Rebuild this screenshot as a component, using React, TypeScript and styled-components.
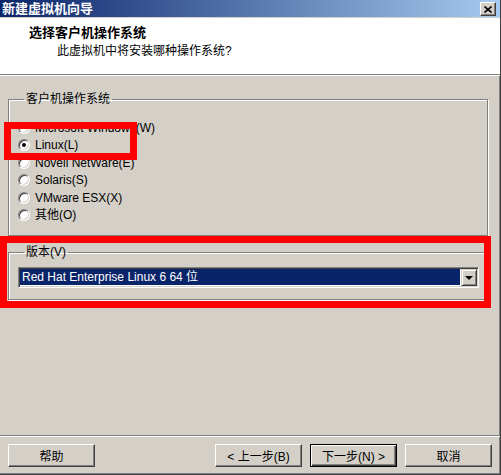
import React from "react";
import styled, { createGlobalStyle } from "styled-components";

const GlobalStyle = createGlobalStyle`
  html, body {
    margin: 0;
    padding: 0;
    background: #d4d0c8;
  }
  * {
    box-sizing: border-box;
  }
`;

const FONT = `"Liberation Sans", "Noto Sans CJK SC", sans-serif`;

const Window = styled.div`
  position: relative;
  width: 501px;
  height: 475px;
  display: flex;
  flex-direction: column;
  background: #d4d0c8;
  border-right: 1px solid #404040;
  border-bottom: 1px solid #404040;
  box-shadow: inset -1px -1px #808080;
  font-family: ${FONT};
  font-size: 12px;
  color: #000;
  overflow: hidden;
`;

const TitleBar = styled.div`
  height: 18px;
  display: flex;
  align-items: center;
  justify-content: space-between;
  padding: 0 4px 0 2px;
  background: linear-gradient(to right, #0a246a, #a6caf0);
  border-bottom: 1px solid #d4d0c8;
  flex-shrink: 0;
`;

const Title = styled.span`
  color: #fff;
  font-weight: bold;
  font-size: 13px;
  line-height: 18px;
`;

const CloseButton = styled.button`
  width: 16px;
  height: 14px;
  padding: 0;
  margin-top: 1px;
  display: flex;
  align-items: center;
  justify-content: center;
  background: #d4d0c8;
  border: 1px solid;
  border-color: #fff #404040 #404040 #fff;
  box-shadow: inset -1px -1px #808080;
`;

const Header = styled.div`
  height: 57px;
  background: #fff;
  padding: 7px 0 0 29px;
  border-bottom: 1px solid #808080;
  box-shadow: 0 1px 0 #fff;
  flex-shrink: 0;
`;

const Heading = styled.div`
  font-weight: bold;
  font-size: 13px;
  line-height: 16px;
`;

const SubHeading = styled.div`
  margin: 3px 0 0 28px;
  line-height: 14px;
`;

const Body = styled.div`
  flex: 1;
  padding: 17px 0 0 8px;
  display: flex;
  flex-direction: column;
  gap: 9px;
`;

const Group = styled.fieldset<{ $pt: number; $pb: number }>`
  width: 480px;
  margin: 0;
  padding: ${(p) => p.$pt}px 8px ${(p) => p.$pb}px 9px;
  border: 1px solid #808080;
  box-shadow: inset 1px 1px #fff, 1px 1px #fff;
  min-width: 0;
`;

const Legend = styled.legend`
  margin-left: 6px;
  padding: 0 2px;
  line-height: 14px;
  font-size: 12px;
`;

const RadioRow = styled.label`
  height: 17.5px;
  display: flex;
  align-items: center;
  gap: 5px;
  line-height: 14px;
`;

const RadioDot = styled.span<{ $checked?: boolean }>`
  width: 12px;
  height: 12px;
  border-radius: 50%;
  background: #fff;
  border: 1px solid;
  border-color: #808080 #fff #fff #808080;
  box-shadow: inset 1px 1px #404040, inset -1px -1px #d4d0c8;
  display: flex;
  align-items: center;
  justify-content: center;
  flex-shrink: 0;
  &::after {
    content: "";
    width: 4px;
    height: 4px;
    border-radius: 50%;
    background: ${(p) => (p.$checked ? "#000" : "transparent")};
  }
`;

const Combo = styled.div`
  height: 21px;
  display: flex;
  padding: 1px;
  border: 1px solid;
  border-color: #808080 #fff #fff #808080;
  box-shadow: inset 1px 1px #404040, inset -1px -1px #d4d0c8;
  background: #fff;
`;

const ComboValue = styled.div`
  flex: 1;
  margin: 0 1px 1px 0;
  padding-left: 2px;
  background: #0a246a;
  color: #fff;
  line-height: 16px;
  white-space: nowrap;
`;

const ComboArrow = styled.div`
  width: 16px;
  display: flex;
  align-items: center;
  justify-content: center;
  background: #d4d0c8;
  border: 1px solid;
  border-color: #d4d0c8 #404040 #404040 #d4d0c8;
  box-shadow: inset 1px 1px #fff, inset -1px -1px #808080;
  &::after {
    content: "";
    border-left: 4px solid transparent;
    border-right: 4px solid transparent;
    border-top: 4px solid #000;
    margin-top: 1px;
  }
`;

const Footer = styled.div`
  flex-shrink: 0;
  border-top: 1px solid #808080;
  box-shadow: inset 0 1px #fff;
  padding: 8px 0 7px 8px;
  display: flex;
  gap: 8px;
`;

const Button = styled.button<{ $default?: boolean }>`
  width: 87px;
  height: 23px;
  padding: 0;
  font-family: ${FONT};
  font-size: 12px;
  color: #000;
  background: #d4d0c8;
  border: 1px solid;
  border-color: ${(p) => (p.$default ? "#000" : "#fff #404040 #404040 #fff")};
  box-shadow: ${(p) =>
    p.$default
      ? "inset 1px 1px #fff, inset -1px -1px #404040, inset -2px -2px #808080"
      : "inset -1px -1px #808080"};
`;

const ButtonRight = styled.div`
  margin-left: auto;
  margin-right: 8px;
  display: flex;
  gap: 8px;
`;

// red annotation frames drawn over the dialog
const Highlight = styled.div<{ $x: number; $y: number; $w: number; $h: number }>`
  position: absolute;
  left: ${(p) => p.$x}px;
  top: ${(p) => p.$y}px;
  width: ${(p) => p.$w}px;
  height: ${(p) => p.$h}px;
  border: 7px solid #ff0000;
  pointer-events: none;
`;

const osList = [
  "Microsoft Windows(W)",
  "Linux(L)",
  "Novell NetWare(E)",
  "Solaris(S)",
  "VMware ESX(X)",
  "其他(O)",
];

const App: React.FC = () => {
  return (
    <Window>
      <GlobalStyle />
      <TitleBar>
        <Title>新建虚拟机向导</Title>
        <CloseButton type="button">
          <svg width="8" height="7" viewBox="0 0 8 7">
            <path d="M0.5 0.5 L7.5 6.5 M7.5 0.5 L0.5 6.5" stroke="#000" strokeWidth="1.6" />
          </svg>
        </CloseButton>
      </TitleBar>
      <Header>
        <Heading>选择客户机操作系统</Heading>
        <SubHeading>此虚拟机中将安装哪种操作系统?</SubHeading>
      </Header>
      <Body>
        <Group $pt={13} $pb={11}>
          <Legend>客户机操作系统</Legend>
          {osList.map((os, i) => (
            <RadioRow key={os}>
              <RadioDot $checked={i === 1} />
              {os}
            </RadioRow>
          ))}
        </Group>
        <Group $pt={8} $pb={11}>
          <Legend>版本(V)</Legend>
          <Combo>
            <ComboValue>Red Hat Enterprise Linux 6 64 位</ComboValue>
            <ComboArrow />
          </Combo>
        </Group>
      </Body>
      <Footer>
        <Button type="button">帮助</Button>
        <ButtonRight>
          <Button type="button">&lt; 上一步(B)</Button>
          <Button type="button" $default>
            下一步(N) &gt;
          </Button>
          <Button type="button">取消</Button>
        </ButtonRight>
      </Footer>
      <Highlight $x={4} $y={122} $w={133} $h={38} />
      <Highlight $x={0} $y={236} $w={491} $h={72} />
    </Window>
  );
};

export default App;
